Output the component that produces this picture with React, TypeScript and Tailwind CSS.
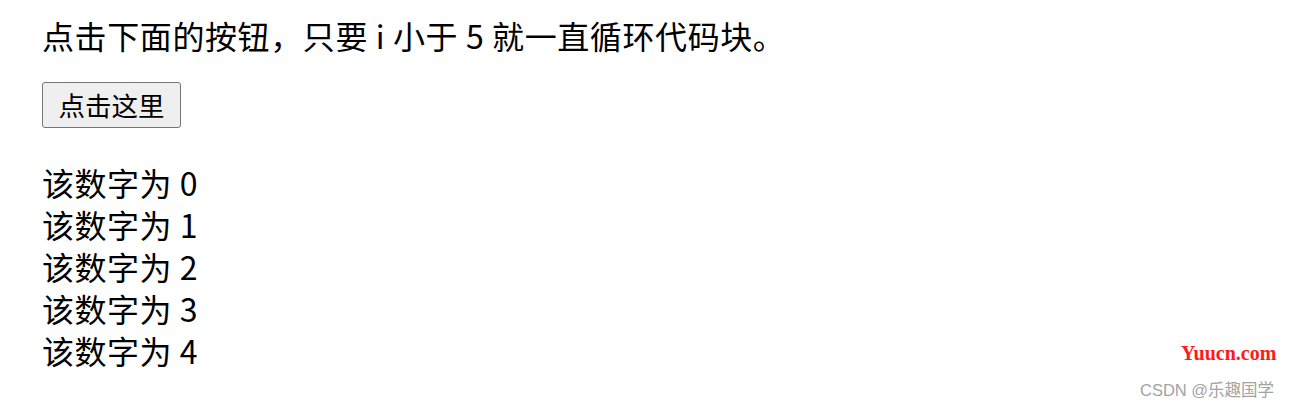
import React from 'react';

const cjk = { fontFamily: '"Noto Sans CJK SC", "Noto Sans", sans-serif' };

export default function App() {
  const nums = [0, 1, 2, 3, 4];
  return (
    <div className="relative w-[1291px] h-[409px] bg-white text-black overflow-hidden" style={cjk}>
      <div className="flex flex-col items-start pl-[42px] pt-[14px]">
        <p className="text-[32px] leading-[42px] tracking-[0.6px]">点击下面的按钮，只要 i 小于 5 就一直循环代码块。</p>
        <button className="mt-[26px] h-[46px] w-[139px] border border-[#767676] bg-[#efefef] rounded-[3px] text-[26.5px] leading-none flex items-center justify-center">
          点击这里
        </button>
        <div className="mt-[33px] flex flex-col">
          {nums.map((n) => (
            <p key={n} className="text-[32px] leading-[42px] tracking-[0.5px]">该数字为 {n}</p>
          ))}
        </div>
      </div>

      {/* watermarks */}
      <span
        className="absolute left-[1181px] top-[343px] text-[20px] font-bold text-[#ff1a1a] leading-none"
        style={{ fontFamily: '"Liberation Serif", serif' }}
      >
        Yuucn.com
      </span>
      <span
        className="absolute left-[1140px] top-[382px] text-[16.5px] text-[#a3a3a3] leading-none"
        style={{ fontFamily: '"Liberation Sans", "Noto Sans CJK SC", sans-serif' }}
      >
        CSDN @乐趣国学
      </span>
    </div>
  );
}
